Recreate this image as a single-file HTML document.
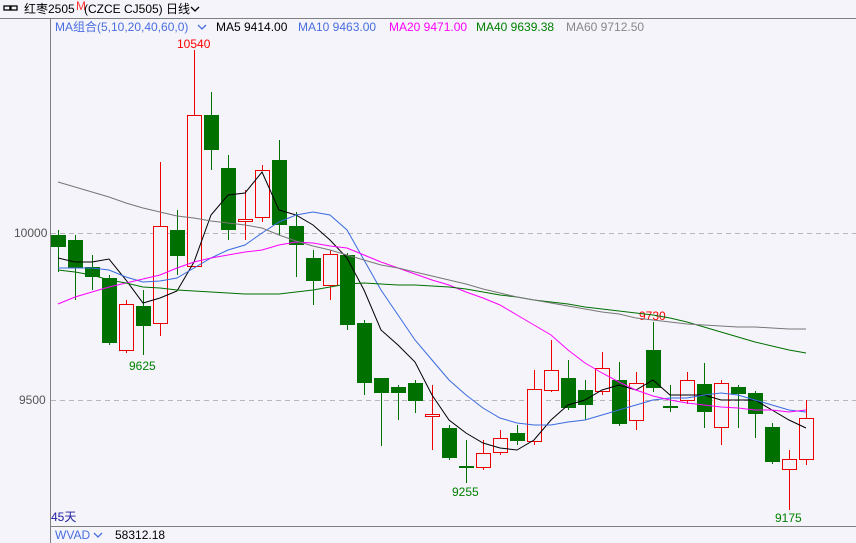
<!DOCTYPE html>
<html><head><meta charset="utf-8"><style>
html,body{margin:0;padding:0;background:#f4f4fa;width:856px;height:543px;overflow:hidden;font-family:"Liberation Sans","Noto Sans CJK SC",sans-serif}
svg{display:block}
text{font-family:"Liberation Sans","Noto Sans CJK SC",sans-serif;font-size:12px}
</style></head><body>
<svg id="s" width="856" height="543" xmlns="http://www.w3.org/2000/svg">
<rect width="856" height="543" fill="#f4f4fa"/>
<line x1="0" y1="18.5" x2="856" y2="18.5" stroke="#808080"/>
<line x1="50.5" y1="18" x2="50.5" y2="543" stroke="#808080"/>
<line x1="50" y1="526.5" x2="856" y2="526.5" stroke="#808080"/>
<line x1="51" y1="233.5" x2="856" y2="233.5" stroke="#b8b8b8" stroke-dasharray="5,4"/>
<line x1="51" y1="400.5" x2="856" y2="400.5" stroke="#b8b8b8" stroke-dasharray="5,4"/>
<text x="14" y="237" fill="#555">10000</text>
<text x="19" y="404" fill="#555">9500</text>
<g stroke="#000" stroke-width="1.3" fill="none"><rect x="4" y="6" width="6" height="4"/><rect x="11" y="6" width="6" height="4"/></g>
<text x="24" y="13" fill="#000">红枣2505</text><text x="76" y="10" fill="#f33" font-size="9">M</text>
<text x="84" y="13" fill="#000">(CZCE CJ505)</text>
<text x="166" y="13" fill="#000">日线</text>
<path d="M191 7 l4 4 l4 -4" stroke="#000" fill="none" stroke-width="1.3"/>
<text x="55" y="31" fill="#4a6ee0">MA组合(5,10,20,40,60,0)</text>
<path d="M198 25 l4 4 l4 -4" stroke="#4a6ee0" fill="none" stroke-width="1.3"/>
<text x="216" y="31" fill="#000">MA5 9414.00</text>
<text x="298" y="31" fill="#4a6ee0">MA10 9463.00</text>
<text x="389" y="31" fill="#f0f">MA20 9471.00</text>
<text x="476" y="31" fill="#008000">MA40 9639.38</text>
<text x="566" y="31" fill="#888">MA60 9712.50</text>
<text x="177" y="48" fill="#f00">10540</text>
<text x="129" y="370" fill="#008000">9625</text>
<text x="452" y="496" fill="#008000">9255</text>
<text x="639" y="320" fill="#f00">9730</text>
<text x="775" y="522" fill="#008000">9175</text>
<text x="51" y="521" fill="#2020a0">45天</text>
<text x="55" y="539" fill="#4a6ee0">WVAD</text>
<path d="M94 533 l4 4 l4 -4" stroke="#4a6ee0" fill="none" stroke-width="1.3"/>
<text x="115" y="539" fill="#000">58312.18</text>
<g id="c"></g>
</svg>
<script>
var C=[[58,235,247,230,272,0],[75,240,268,235,300,0],[92,267,277,255,290,0],[109,278,343,275,345,0],[126,304,350,300,353,1],[143,306,326,290,355,0],[160,226,323,162,336,1],[177,230,256,210,275,0],[194,115,266,50,268,1],[211,115,150,92,170,0],[228,168,230,155,240,0],[245,219,221,190,240,1],[262,170,217,165,222,1],[279,160,225,140,235,0],[296,226,245,212,277,0],[313,258,281,250,305,0],[330,254,285,250,300,1],[347,255,325,253,330,0],[364,323,383,320,395,0],[381,378,393,378,446,0],[398,387,393,385,420,0],[415,383,401,380,413,0],[432,414,416,385,450,1],[449,428,458,425,460,0],[466,466,468,440,483,0],[483,453,467,440,470,1],[500,438,452,430,455,1],[517,433,441,425,445,0],[534,389,441,370,445,1],[551,370,390,340,392,1],[568,378,408,360,410,0],[585,390,405,380,420,0],[602,368,391,352,395,1],[619,380,424,362,426,0],[636,383,420,372,430,1],[653,350,388,322,392,0],[670,406,408,385,412,0],[687,380,400,372,404,1],[704,384,412,363,428,0],[721,383,427,380,445,1],[738,387,394,385,428,0],[755,393,414,391,438,0],[772,427,462,423,464,0],[789,459,469,450,510,1],[806,418,459,400,465,1]];
var xs=C.map(function(c){return c[0]});
var L={"#000":[258,262,262,259,280,303,298,291,262,215,195,193,172,210,215,225,240,258,290,330,345,362,395,420,433,443,448,450,440,420,405,400,390,385,390,380,395,395,395,400,400,400,410,420,428],
"#3a6be0":[268,268,268,270,277,282,281,278,268,258,250,245,233,222,215,212,215,230,260,290,315,340,360,380,395,408,418,423,425,425,422,420,415,410,405,400,398,398,395,393,395,400,405,410,412],
"#f0f":[304,297,292,287,283,279,275,268,262,258,255,252,250,245,242,243,246,248,255,262,268,274,280,285,292,298,305,315,325,335,350,363,373,382,390,396,400,403,405,407,408,410,410,412,410],
"#007000":[270,272,275,280,283,287,288,290,291,292,293,294,294,294,292,290,287,284,283,284,285,285,286,287,289,292,295,297,300,302,304,307,309,311,313,315,318,322,327,332,337,342,346,350,353],
"#777":[182,187,192,197,203,208,212,216,218,221,223,225,228,235,241,246,250,255,260,265,268,272,276,280,284,289,293,297,300,303,306,309,312,314,318,320,322,324,325,326,327,327,328,329,329]};
var g=document.getElementById('c'),h='';
C.forEach(function(c){var x=c[0],col=c[5]?'#e00':'#007000';var t=Math.min(c[1],c[2]),b=Math.max(c[1],c[2]);
h+='<line x1="'+(x+.5)+'" y1="'+c[3]+'" x2="'+(x+.5)+'" y2="'+c[4]+'" stroke="'+col+'"/>';
if(c[5])h+='<rect x="'+(x-6.5)+'" y="'+(t+.5)+'" width="14" height="'+Math.max(b-t,1)+'" fill="#f4f4fa" stroke="#e00"/>';
else h+='<rect x="'+(x-7)+'" y="'+t+'" width="15" height="'+Math.max(b-t,2)+'" fill="#007000"/>';});
for(var k in L){h+='<polyline fill="none" stroke="'+k+'" stroke-width="1" points="'+L[k].map(function(y,i){return xs[i]+','+y}).join(' ')+'"/>';}
g.innerHTML=h;
</script>
</body></html>
